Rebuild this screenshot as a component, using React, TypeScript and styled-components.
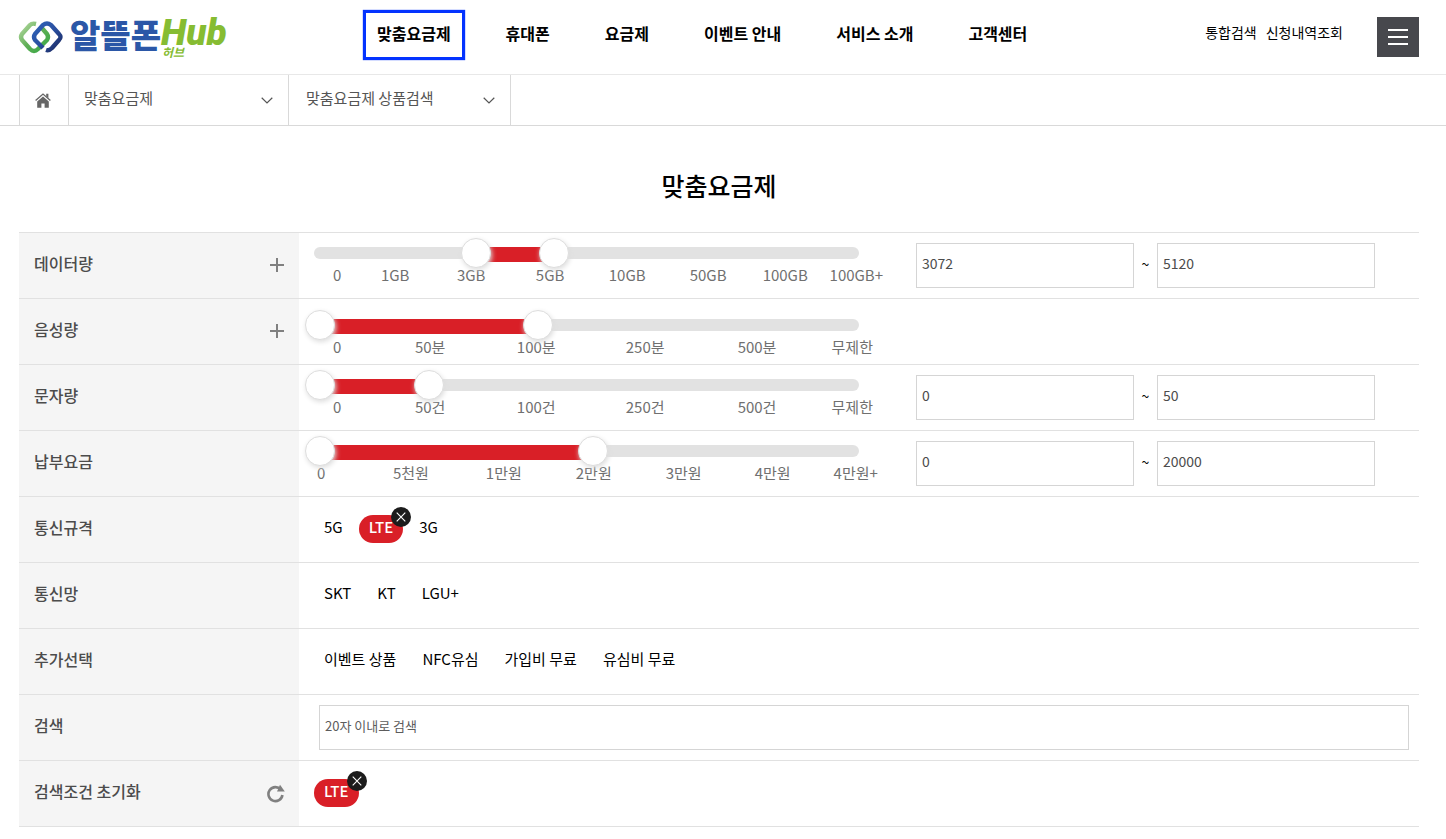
import React, { useState } from "react";
import styled, { createGlobalStyle, css } from "styled-components";

const GlobalStyle = createGlobalStyle`
  *, *::before, *::after { box-sizing: border-box; }
  body {
    margin: 0;
    background: #fff;
    color: #000;
    font-family: "Noto Sans CJK KR", "Noto Sans", sans-serif;
    font-size: 15px;
    line-height: 24px;
  }
  a { color: inherit; text-decoration: none; }
  button, input { font: inherit; color: inherit; margin: 0; }
  button { border: 0; background: none; padding: 0; cursor: pointer; }
  ul { list-style: none; margin: 0; padding: 0; }
`;

const Header = styled.header`
  display: flex;
  align-items: flex-start;
  height: 75px;
  padding: 17px 27px 0 19px;
  border-bottom: 1px solid #e8e8e8;
`;

const LogoLink = styled.a`
  flex: none;
  display: block;
  width: 212px;
  height: 44px;
`;

const LogoSvg = styled.svg`
  display: block;
  overflow: visible;
`;

const MainNav = styled.nav`
  margin-left: 146px;
  padding-top: 4px;
`;

const NavList = styled.ul`
  display: flex;
  gap: 55px;
`;

const NavLink = styled.a<{ $active?: boolean }>`
  display: block;
  position: relative;
  font-size: 16px;
  font-weight: 700;
  white-space: nowrap;
  ${({ $active }) =>
    $active &&
    css`
      &::after {
        content: "";
        position: absolute;
        inset: -11px -14px -15px -14px;
        border: 3px solid #0433ff;
        box-shadow: 0 0 1px #0433ff;
      }
    `}
`;

const Utilities = styled.ul`
  display: flex;
  gap: 9px;
  margin-left: auto;
  padding-top: 3px;
  font-size: 14px;
  white-space: nowrap;
`;

const MenuButton = styled.button`
  flex: none;
  display: flex;
  flex-direction: column;
  align-items: center;
  justify-content: center;
  gap: 5px;
  width: 42px;
  height: 40px;
  margin-left: 34px;
  background: #47484d;
`;

const MenuBar = styled.span`
  width: 20px;
  height: 2px;
  background: #fff;
`;

const Breadcrumb = styled.nav`
  display: flex;
  height: 51px;
  padding-left: 19px;
  border-bottom: 1px solid #d9d9d9;
`;

const HomeLink = styled.a`
  display: flex;
  align-items: center;
  justify-content: center;
  width: 50px;
  padding-right: 2px;
  border: solid #d9d9d9;
  border-width: 0 1px;
`;

const CrumbButton = styled.button<{ $wide?: boolean }>`
  display: flex;
  align-items: center;
  justify-content: space-between;
  width: ${({ $wide }) => ($wide ? 222 : 220)}px;
  padding: 0 15px 0 ${({ $wide }) => ($wide ? 17 : 15)}px;
  border-right: 1px solid #d9d9d9;
  color: #555;
  text-align: left;
`;

const CrumbText = styled.span`
  padding-bottom: 4px;
`;

const Main = styled.main`
  padding: 41px 27px 12px 19px;
`;

const Title = styled.h1`
  margin: 0 0 29px;
  font-size: 25px;
  line-height: 36px;
  font-weight: 500;
  text-align: center;
`;

const FilterTable = styled.table`
  width: 100%;
  border-collapse: collapse;
  table-layout: fixed;
`;

const LabelColumn = styled.col`
  width: 20%;
`;

const FilterRow = styled.tr`
  height: 66px;
  border-top: 1px solid #e1e1e1;
  &:last-child {
    border-bottom: 1px solid #e1e1e1;
  }
`;

const LabelCell = styled.th`
  padding: 0 14px 0 15px;
  background: #f5f5f5;
  color: #4c4c4c;
  font-size: 16px;
  font-weight: 500;
  text-align: left;
`;

const LabelLine = styled.div`
  display: flex;
  align-items: center;
  justify-content: space-between;
`;

const LabelText = styled.span`
  display: block;
  padding-bottom: 6px;
`;

const IconButton = styled.button`
  display: flex;
`;

const ContentCell = styled.td`
  padding: 0 15px;
`;

const RangeLine = styled.div`
  display: flex;
  align-items: center;
  min-height: 45px;
`;

const SliderBlock = styled.div<{ $lowered?: boolean }>`
  width: 50%;
  padding-top: ${({ $lowered }) => ($lowered ? 15 : 3)}px;
`;

const Track = styled.div`
  position: relative;
  height: 12px;
  margin-bottom: 4px;
  border-radius: 6px;
  background: #e2e2e2;
`;

const Selection = styled.div`
  position: absolute;
  top: 0;
  height: 15px;
  background: #d91f27;
`;

const thumb = css`
  appearance: none;
  width: 30px;
  height: 30px;
  border: 1px solid #dedede;
  border-radius: 50%;
  background: #fff;
  box-shadow: 1px 2px 5px #ddd;
  pointer-events: auto;
  cursor: pointer;
`;

const RangeInput = styled.input`
  position: absolute;
  top: -9px;
  left: -9px;
  width: calc(100% + 30px);
  height: 30px;
  appearance: none;
  background: none;
  pointer-events: none;
  outline: 0;
  &::-webkit-slider-thumb { ${thumb} }
  &::-moz-range-thumb { ${thumb} }
`;

const Scale = styled.div<{ $columns: string; $indent: number }>`
  display: grid;
  grid-template-columns: ${({ $columns }) => $columns};
  width: 110%;
  padding-left: ${({ $indent }) => $indent}px;
  color: #707070;
  white-space: nowrap;
`;

const NumberPair = styled.div`
  display: flex;
  flex: 1;
  align-items: center;
  padding-left: 57px;
`;

const NumberInput = styled.input`
  width: 45%;
  max-width: 218px;
  height: 45px;
  padding: 0 5px 5px;
  border: 1px solid #d5d5d5;
  background: #fff;
  color: #4c4c4c;
  font-size: 14px;
`;

const Tilde = styled.span`
  width: 23px;
  padding-bottom: 4px;
  text-align: center;
  font-size: 14px;
`;

const ChipList = styled.div`
  display: flex;
  gap: 6px;
  padding-bottom: 2px;
`;

const Chip = styled.button<{ $selected?: boolean }>`
  position: relative;
  height: 28px;
  padding: 0 10px 4px;
  border-radius: 14px;
  white-space: nowrap;
  ${({ $selected }) =>
    $selected &&
    css`
      background: #d91f27;
      color: #fff;
      font-weight: 500;
    `}
`;

const RemoveBadge = styled.span`
  position: absolute;
  top: -8px;
  right: -8px;
  display: flex;
  align-items: center;
  justify-content: center;
  width: 20px;
  height: 20px;
  border-radius: 50%;
  background: #1c1c1c;
`;

const SearchInput = styled.input`
  display: block;
  width: 100%;
  height: 45px;
  padding: 0 5px 5px;
  border: 1px solid #d5d5d5;
  color: #555;
  font-size: 13px;
  &::placeholder {
    color: #5c5c5c;
    opacity: 1;
  }
`;

const SearchCell = styled.td`
  padding: 0 10px 0 20px;
`;

function Logo() {
  return (
    <LogoSvg width="212" height="44" viewBox="0 0 212 44" role="img" aria-label="알뜰폰 허브">
      <defs>
        <linearGradient id="leaf" x1="0" y1="0" x2="1" y2="1">
          <stop offset="0" stopColor="#b5d9a0" />
          <stop offset="0.5" stopColor="#5fae56" />
          <stop offset="1" stopColor="#35a844" />
        </linearGradient>
        <linearGradient id="navy" x1="0" y1="0" x2="1" y2="1">
          <stop offset="0" stopColor="#2f62b8" />
          <stop offset="0.5" stopColor="#2a50a0" />
          <stop offset="1" stopColor="#1b2860" />
        </linearGradient>
      </defs>
      <g fill="none" strokeWidth="4.4" strokeLinejoin="round">
        <path d="M17 7 Q13 6 11 8 L3 17 Q1 20 3 23 L11 32 Q15 36 19 32 L28 23 Q30 20 28 17 L22 10" stroke="url(#leaf)" />
        <path d="M24 31 L16 23 Q14 20 16 17 L24 8 Q28 5 32 8 L40 17 Q43 20 40 23 L33 31 Q30 34 27 33" stroke="url(#navy)" />
      </g>
      <text x="51" y="31" fill="#2b57a7" fontSize="33" fontWeight="900">알뜰폰</text>
      <text x="142" y="28" fill="#86bc32" fontFamily="Roboto, sans-serif" fontSize="37" fontWeight="900" fontStyle="italic">Hub</text>
      <text x="143" y="40" fill="#86bc32" fontSize="12" fontWeight="700" fontStyle="italic">허브</text>
    </LogoSvg>
  );
}

function Chevron() {
  return (
    <svg width="12" height="7" viewBox="0 0 12 7" fill="none" stroke="#555" strokeWidth="1.2" aria-hidden="true">
      <path d="M0.7 0.8 L6 6 L11.3 0.8" />
    </svg>
  );
}

function CloseMark() {
  return (
    <RemoveBadge>
      <svg width="10" height="10" viewBox="0 0 10 10" stroke="#fff" strokeWidth="1.1" aria-hidden="true">
        <path d="M0.7 0.7 L9.3 9.3 M9.3 0.7 L0.7 9.3" />
      </svg>
    </RemoveBadge>
  );
}

interface RangeSpec {
  label: string;
  steps: number;
  start: [number, number];
  marks: string[];
  columns: string;
  indent: number;
  numbers?: [string, string];
  expandable?: boolean;
}

const ranges: RangeSpec[] = [
  {
    label: "데이터량",
    steps: 7,
    start: [2, 3],
    marks: ["0", "1GB", "3GB", "5GB", "10GB", "50GB", "100GB", "100GB+"],
    columns: "48fr 76fr 79fr 73fr 81fr 73fr 67fr 84fr",
    indent: 19,
    numbers: ["3072", "5120"],
    expandable: true,
  },
  {
    label: "음성량",
    steps: 5,
    start: [0, 2],
    marks: ["0", "50분", "100분", "250분", "500분", "무제한"],
    columns: "82fr 102fr 109fr 112fr 94fr 82fr",
    indent: 19,
    expandable: true,
  },
  {
    label: "문자량",
    steps: 5,
    start: [0, 1],
    marks: ["0", "50건", "100건", "250건", "500건", "무제한"],
    columns: "82fr 102fr 109fr 112fr 94fr 82fr",
    indent: 19,
    numbers: ["0", "50"],
  },
  {
    label: "납부요금",
    steps: 6,
    start: [0, 3],
    marks: ["0", "5천원", "1만원", "2만원", "3만원", "4만원", "4만원+"],
    columns: "76fr 93fr 90fr 90fr 89fr 79fr 80fr",
    indent: 3,
    numbers: ["0", "20000"],
  },
];

function RangeFilter({ spec }: { spec: RangeSpec }) {
  const [low, setLow] = useState(spec.start[0]);
  const [high, setHigh] = useState(spec.start[1]);
  const percent = (v: number) => (v / spec.steps) * 100;
  return (
    <FilterRow>
      <LabelCell scope="row">
        <LabelLine>
          <LabelText>{spec.label}</LabelText>
          {spec.expandable && (
            <IconButton type="button" aria-label={`${spec.label} 펼치기`}>
              <svg width="16" height="16" viewBox="0 0 16 16" stroke="#808080" strokeWidth="2" aria-hidden="true">
                <path d="M1 7 H15 M8 0 V14" />
              </svg>
            </IconButton>
          )}
        </LabelLine>
      </LabelCell>
      <ContentCell>
        <RangeLine>
          <SliderBlock $lowered={!spec.numbers}>
            <Track>
              <Selection style={{ left: `${percent(low)}%`, width: `${percent(high - low)}%` }} />
              <RangeInput
                type="range"
                aria-label={`${spec.label} 최소`}
                min={0}
                max={spec.steps}
                value={low}
                onChange={(e) => setLow(Math.min(Number(e.target.value), high))}
              />
              <RangeInput
                type="range"
                aria-label={`${spec.label} 최대`}
                min={0}
                max={spec.steps}
                value={high}
                onChange={(e) => setHigh(Math.max(Number(e.target.value), low))}
              />
            </Track>
            <Scale $columns={spec.columns} $indent={spec.indent}>
              {spec.marks.map((mark) => (
                <span key={mark}>{mark}</span>
              ))}
            </Scale>
          </SliderBlock>
          {spec.numbers && (
            <NumberPair>
              <NumberInput type="text" aria-label={`${spec.label} 최소값`} defaultValue={spec.numbers[0]} />
              <Tilde>~</Tilde>
              <NumberInput type="text" aria-label={`${spec.label} 최대값`} defaultValue={spec.numbers[1]} />
            </NumberPair>
          )}
        </RangeLine>
      </ContentCell>
    </FilterRow>
  );
}

function ChipFilter({ label, options, selected }: { label: string; options: string[]; selected?: string }) {
  return (
    <FilterRow>
      <LabelCell scope="row">
        <LabelText>{label}</LabelText>
      </LabelCell>
      <ContentCell>
        <ChipList>
          {options.map((option) => (
            <Chip key={option} type="button" $selected={option === selected} aria-pressed={option === selected}>
              {option}
              {option === selected && <CloseMark />}
            </Chip>
          ))}
        </ChipList>
      </ContentCell>
    </FilterRow>
  );
}

const menu = ["맞춤요금제", "휴대폰", "요금제", "이벤트 안내", "서비스 소개", "고객센터"];

export default function App() {
  return (
    <>
      <GlobalStyle />
      <Header>
        <LogoLink href="#">
          <Logo />
        </LogoLink>
        <MainNav>
          <NavList>
            {menu.map((item, i) => (
              <li key={item}>
                <NavLink href="#" $active={i === 0}>{item}</NavLink>
              </li>
            ))}
          </NavList>
        </MainNav>
        <Utilities>
          <li><a href="#">통합검색</a></li>
          <li><a href="#">신청내역조회</a></li>
        </Utilities>
        <MenuButton type="button" aria-label="전체메뉴">
          <MenuBar />
          <MenuBar />
          <MenuBar />
        </MenuButton>
      </Header>
      <Breadcrumb>
        <HomeLink href="#" aria-label="홈">
          <svg width="16" height="15" viewBox="0 0 16 15" aria-hidden="true">
            <path d="M0.6 7.6 L8 1 L15.4 7.6" fill="none" stroke="#666" strokeWidth="1.3" />
            <path d="M11.2 0.8 H13.4 V5.2 L11.2 3.2 Z" fill="#666" />
            <path d="M8 3.4 L13.8 8.6 V14.8 H9.6 V10.6 H6.4 V14.8 H2.2 V8.6 Z" fill="#666" />
          </svg>
        </HomeLink>
        <CrumbButton type="button">
          <CrumbText>맞춤요금제</CrumbText>
          <Chevron />
        </CrumbButton>
        <CrumbButton type="button" $wide>
          <CrumbText>맞춤요금제 상품검색</CrumbText>
          <Chevron />
        </CrumbButton>
      </Breadcrumb>
      <Main>
        <Title>맞춤요금제</Title>
        <FilterTable>
          <colgroup>
            <LabelColumn />
            <col />
          </colgroup>
          <tbody>
            {ranges.map((spec) => (
              <RangeFilter key={spec.label} spec={spec} />
            ))}
            <ChipFilter label="통신규격" options={["5G", "LTE", "3G"]} selected="LTE" />
            <ChipFilter label="통신망" options={["SKT", "KT", "LGU+"]} />
            <ChipFilter label="추가선택" options={["이벤트 상품", "NFC유심", "가입비 무료", "유심비 무료"]} />
            <FilterRow>
              <LabelCell scope="row">
                <label htmlFor="keyword"><LabelText>검색</LabelText></label>
              </LabelCell>
              <SearchCell>
                <SearchInput id="keyword" type="text" maxLength={20} placeholder="20자 이내로 검색" />
              </SearchCell>
            </FilterRow>
            <FilterRow>
              <LabelCell scope="row">
                <LabelLine>
                  <LabelText>검색조건 초기화</LabelText>
                  <IconButton type="button" aria-label="초기화">
                    <svg width="18" height="20" viewBox="0 0 18 20" aria-hidden="true">
                      <path d="M13.8 5.6 A7 7 0 1 0 15.4 11" fill="none" stroke="#808080" strokeWidth="2.6" />
                      <path d="M13 0.8 L17.8 7.4 L10 7.4 Z" fill="#808080" />
                    </svg>
                  </IconButton>
                </LabelLine>
              </LabelCell>
              <ContentCell>
                <ChipList>
                  <Chip type="button" $selected>
                    LTE
                    <CloseMark />
                  </Chip>
                </ChipList>
              </ContentCell>
            </FilterRow>
          </tbody>
        </FilterTable>
      </Main>
    </>
  );
}
